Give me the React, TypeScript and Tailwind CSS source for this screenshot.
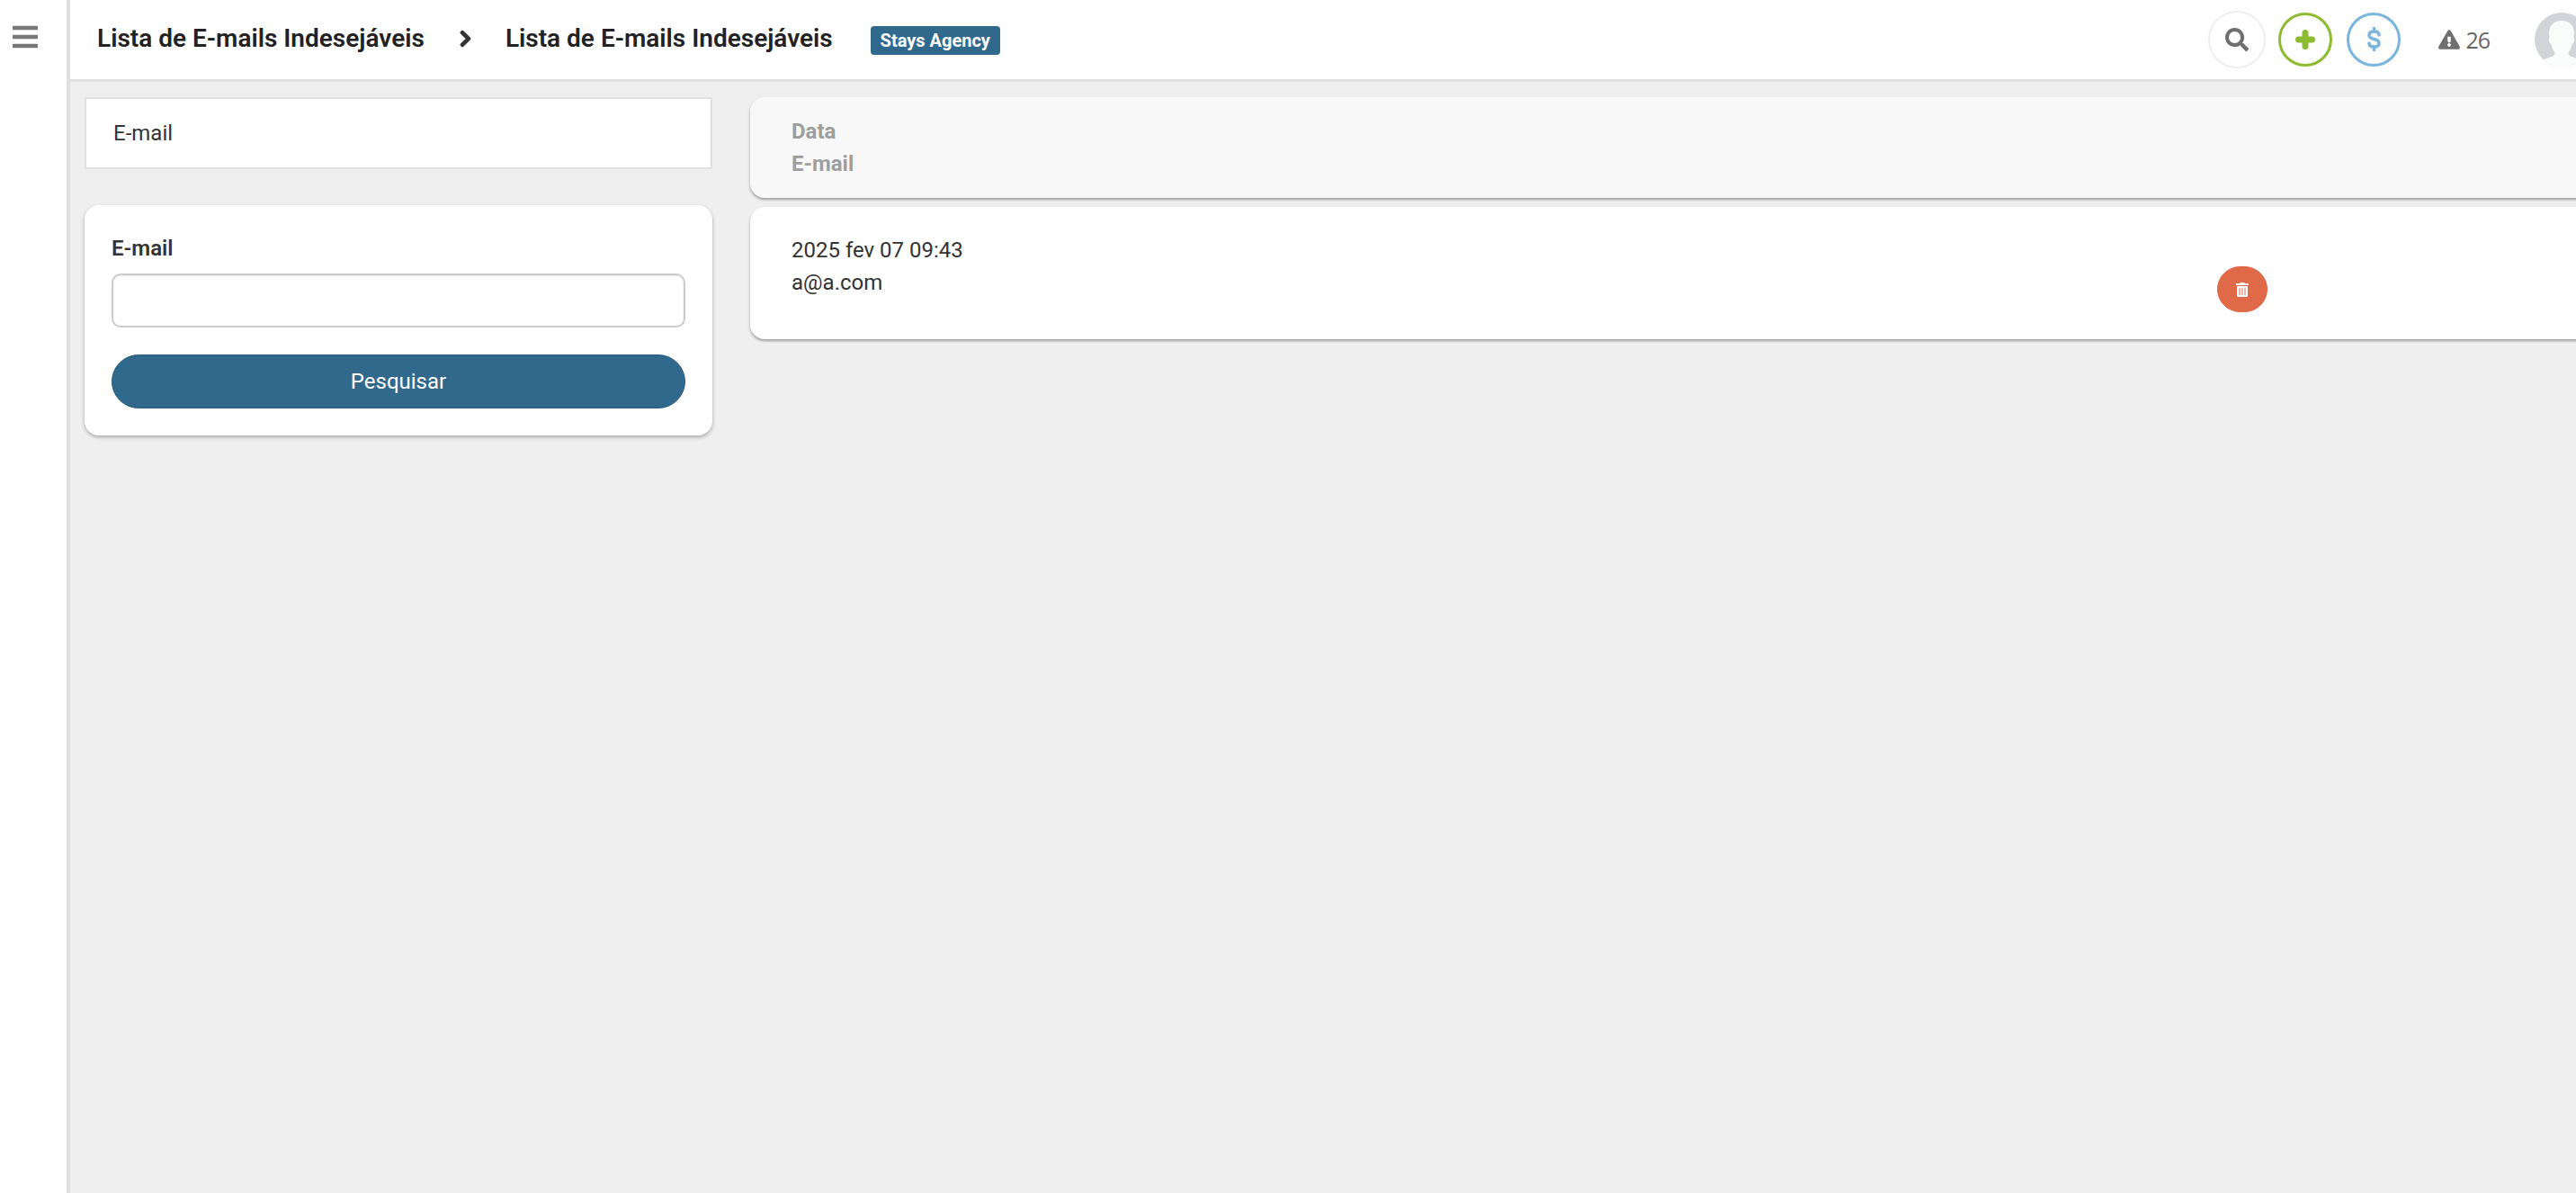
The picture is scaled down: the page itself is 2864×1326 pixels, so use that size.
import { FaBars, FaChevronRight, FaExclamationTriangle, FaSearch, FaTrashAlt } from "react-icons/fa";

const Avatar = () => (
  <svg viewBox="0 0 60 60" className="w-[60px] h-[60px] shrink-0">
    <defs>
      <clipPath id="avatar-clip">
        <circle cx="30" cy="30" r="30" />
      </clipPath>
    </defs>
    <g clipPath="url(#avatar-clip)">
      <rect width="60" height="60" fill="#d2d4da" />
      <path
        d="M30 9c-9 0-14 6-14 14 0 1 0 3 .5 5-1 .5-1 3 0 5 .5 1 1.500 2 2 2 .5 4 2 7 4 9 0 3-1 4-4 5l-8 3 2 9h35l2-9-8-3c-3-1-4-2-4-5 2-2 3.500-5 4-9 .5 0 1.500-1 2-2 1-2 1-4.500 0-5 .5-2 .5-4 .5-5 0-8-5-14-14-14z"
        fill="#fbfcfc"
      />
    </g>
  </svg>
);

const PlusIcon = () => (
  <svg viewBox="0 0 22 22" className="w-[22px] h-[22px]">
    <path d="M11 3.500V18.500M3.500 11H18.500" stroke="#8dbb31" strokeWidth="7" strokeLinecap="round" fill="none" />
  </svg>
);

const DollarIcon = () => (
  <svg viewBox="0 0 15 27" className="w-[15px] h-[27px]">
    <path
      d="M13 9C13 6.300 10.500 5 7.500 5C4.200 5 2 6.500 2 9C2 12 5 12.900 7.500 13.500C10 14.100 13 15 13 18C13 20.500 10.800 22 7.500 22C4.500 22 2 20.700 2 18M7.500 1.500V5M7.500 22V25.500"
      stroke="#7ab5dd"
      strokeWidth="3.500"
      strokeLinecap="round"
      fill="none"
    />
  </svg>
);

export default function App() {
  return (
    <div className="flex h-screen overflow-hidden bg-[#efefef] font-['Roboto',sans-serif] text-[#333]">
      {/* sidebar */}
      <aside className="w-[78px] shrink-0 bg-white border-r-4 border-[#e0e0e0] pl-[14px] pt-[25px]">
        <FaBars className="w-[28px] h-[32px] text-[#777]" />
      </aside>

      <div className="flex-1 min-w-0 flex flex-col">
        {/* header */}
        <header className="h-[91px] shrink-0 bg-white border-b-[3px] border-[#e0e0e0] flex items-center pl-[30px] pb-[1px]">
          <h1 className="text-[28px] leading-[32px] font-semibold text-[#222] -mt-[2px]">Lista de E-mails Indesejáveis</h1>
          <FaChevronRight className="w-[17px] h-[20px] ml-[37px] text-[#333] -mt-[1px] stroke-[40]" />
          <h1 className="text-[28px] leading-[32px] font-semibold text-[#222] ml-[36px] -mt-[2px]">Lista de E-mails Indesejáveis</h1>
          <span className="ml-[42px] mt-[2px] w-[144px] h-[32px] rounded-[4px] bg-[#30698c] text-white text-center text-[20px] leading-[32px] font-bold">Stays Agency</span>

          <div className="ml-auto flex items-center -mr-[14px]">
            <div className="w-[64px] h-[64px] rounded-full border-2 border-[#eee] flex items-center justify-center">
              <FaSearch className="w-[26px] h-[26px] text-[#6f6f6f]" />
            </div>
            <div className="ml-[14px] w-[60px] h-[60px] rounded-full border-[3px] border-[#8dbb31] flex items-center justify-center">
              <PlusIcon />
            </div>
            <div className="ml-[16px] w-[60px] h-[60px] rounded-full border-[3px] border-[#7ab5dd] flex items-center justify-center">
              <DollarIcon />
            </div>
            <div className="ml-[42px] flex items-center gap-[6px] text-[#666]">
              <FaExclamationTriangle className="w-[24px] h-[22px] text-[#6f6f6f]" />
              <span className="text-[25px] leading-[30px] font-['Open_Sans',sans-serif] tracking-[-1px]">26</span>
            </div>
            <div className="ml-[50px]">
              <Avatar />
            </div>
          </div>
        </header>

        {/* content */}
        <main className="flex items-start pl-[16px] pt-[17px] gap-[42px]">
          <div className="w-[698px] shrink-0">
            <div className="h-[80px] bg-white border-2 border-[#e0e0e0] flex items-center pl-[30px] text-[24px] text-[#333]">E-mail</div>
            <div className="mt-[40px] h-[256px] bg-white rounded-[16px] shadow-[0_2px_4px_rgba(0,0,0,0.3)] px-[30px] pt-[33px]">
              <label className="block text-[24px] leading-[30px] font-semibold text-[#333]">E-mail</label>
              <input className="mt-[13px] block w-full h-[60px] bg-white rounded-[10px] border-2 border-[#ccc] shadow-[inset_0_1px_2px_rgba(0,0,0,0.1)] outline-none" />
              <button className="mt-[30px] block w-full h-[60px] rounded-[30px] bg-[#30698c] border border-[#285a7a] text-white text-[24px]">Pesquisar</button>
            </div>
          </div>

          <div className="w-[2100px] shrink-0">
            <div className="h-[112px] bg-[#f8f8f8] rounded-l-[16px] shadow-[0_2px_3px_rgba(0,0,0,0.35)] pl-[46px] pt-[20px] text-[24px] leading-[36px] font-bold text-[#9e9e9e]">
              <div>Data</div>
              <div>E-mail</div>
            </div>
            <div className="mt-[10px] h-[147px] bg-white rounded-l-[16px] shadow-[0_2px_3px_rgba(0,0,0,0.35)] pl-[46px] pt-[30px] flex items-start">
              <div className="w-[1585px] text-[24px] leading-[36px] text-[#333]">
                <div>2025 fev 07 09:43</div>
                <div>a@a.com</div>
              </div>
              <button className="mt-[36px] w-[56px] h-[51px] rounded-full bg-[#e06a48] border border-[#e0623e] flex items-center justify-center">
                <FaTrashAlt className="w-[14px] h-[16px] text-white" />
              </button>
            </div>
          </div>
        </main>
      </div>
    </div>
  );
}
